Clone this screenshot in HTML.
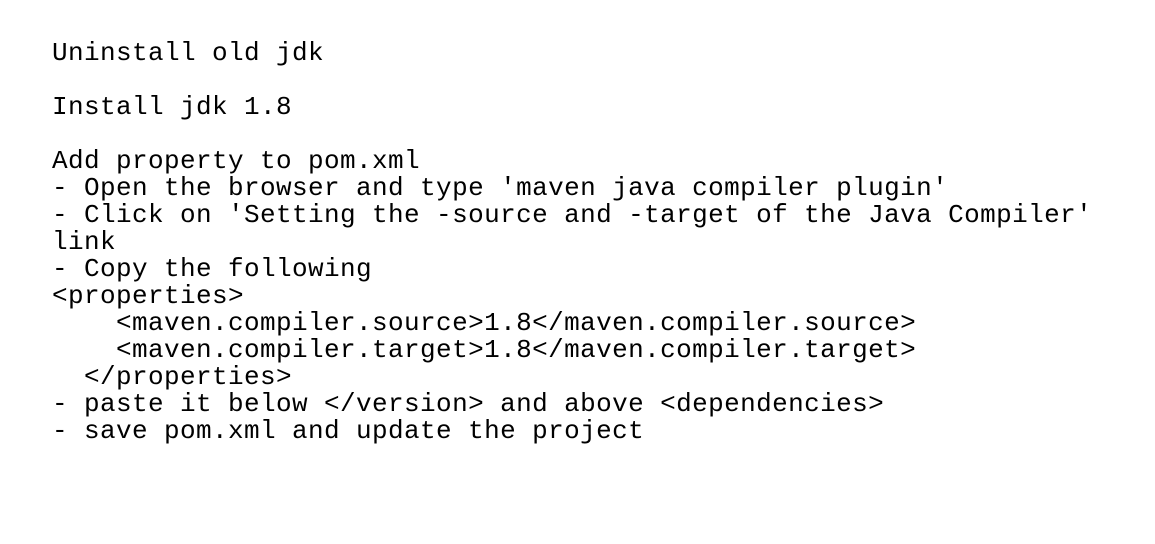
<!DOCTYPE html>
<html><head><meta charset="utf-8"><style>
html,body{margin:0;padding:0;background:#fff;width:1155px;height:544px;overflow:hidden}
pre{position:absolute;left:52px;top:40px;margin:0;font-family:"Liberation Mono",monospace;font-size:26px;letter-spacing:0.4px;line-height:27px;color:#000}
</style></head><body><pre>Uninstall old jdk

Install jdk 1.8

Add property to pom.xml
- Open the browser and type 'maven java compiler plugin'
- Click on 'Setting the -source and -target of the Java Compiler'
link
- Copy the following
&lt;properties&gt;
    &lt;maven.compiler.source&gt;1.8&lt;/maven.compiler.source&gt;
    &lt;maven.compiler.target&gt;1.8&lt;/maven.compiler.target&gt;
  &lt;/properties&gt;
- paste it below &lt;/version&gt; and above &lt;dependencies&gt;
- save pom.xml and update the project</pre></body></html>
